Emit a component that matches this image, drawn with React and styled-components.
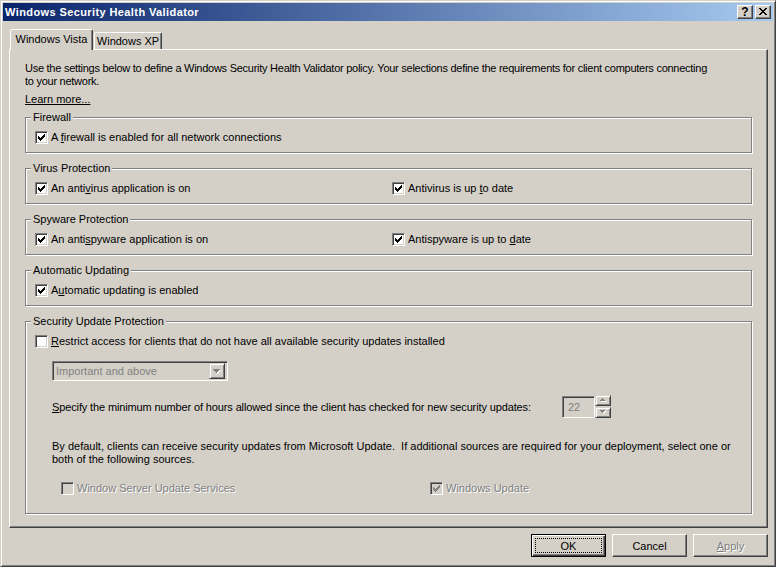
import React from "react";
import styled, { createGlobalStyle } from "styled-components";

const FACE = "#d4d0c8";
const SHADOW = "#808080";
const DARK = "#404040";

const GlobalStyle = createGlobalStyle`
  html, body {
    margin: 0;
    padding: 0;
    background: ${FACE};
  }
  body {
    font-family: "Liberation Sans", Arial, sans-serif;
    font-size: 11px;
    color: #000;
  }
  * {
    box-sizing: border-box;
  }
`;

const Window = styled.div`
  width: 776px;
  height: 567px;
  display: flex;
  flex-direction: column;
  padding: 2px;
  background: ${FACE};
  border: 1px solid;
  border-color: ${FACE} ${DARK} ${DARK} ${FACE};
  box-shadow: inset 1px 1px #fff, inset -1px -1px ${SHADOW};
`;

const TitleBar = styled.div`
  height: 18px;
  display: flex;
  align-items: center;
  padding: 0 2px;
  background: linear-gradient(to right, #0a246a, #a6caf0);
`;

const Title = styled.div`
  flex: 1;
  color: #fff;
  font-weight: bold;
  letter-spacing: 0.4px;
  line-height: 14px;
`;

const TitleButtons = styled.div`
  display: flex;
  gap: 2px;
`;

const TitleButton = styled.div`
  width: 16px;
  height: 14px;
  display: flex;
  align-items: center;
  justify-content: center;
  background: ${FACE};
  border: 1px solid;
  border-color: #fff ${DARK} ${DARK} #fff;
  box-shadow: inset -1px -1px ${SHADOW};
  font-weight: bold;
  font-size: 12px;
  line-height: 12px;
  padding-bottom: 1px;
`;

const Body = styled.div`
  flex: 1;
  display: flex;
  flex-direction: column;
  padding: 8px 5px 0 6px;
`;

const TabStrip = styled.div`
  height: 20px;
  display: flex;
  align-items: flex-end;
  padding-left: 1px;
`;

const Tab = styled.div`
  position: relative;
  width: ${(p) => (p.$selected ? 83 : 68)}px;
  height: ${(p) => (p.$selected ? 21 : 17)}px;
  margin-bottom: ${(p) => (p.$selected ? -1 : 0)}px;
  margin-left: ${(p) => (p.$selected ? 0 : 1)}px;
  z-index: ${(p) => (p.$selected ? 2 : 1)};
  display: flex;
  align-items: center;
  justify-content: center;
  padding-bottom: ${(p) => (p.$selected ? 2 : 0)}px;
  background: ${FACE};
  border: 1px solid;
  border-bottom: none;
  border-color: #fff ${DARK} transparent #fff;
  border-radius: 2px 2px 0 0;
  box-shadow: inset -1px 0 ${SHADOW};
  white-space: nowrap;
`;

const Panel = styled.div`
  flex: 1;
  display: flex;
  flex-direction: column;
  padding: 12px 15px 0 15px;
  border: 1px solid;
  border-color: #fff ${DARK} ${DARK} #fff;
  box-shadow: inset -1px -1px ${SHADOW};
`;

const Intro = styled.p`
  margin: 0;
  line-height: 13px;
  letter-spacing: -0.26px;
  white-space: nowrap;
`;

const LearnMore = styled.span`
  margin-top: 5px;
  line-height: 13px;
  text-decoration: underline;
  align-self: flex-start;
`;

const Group = styled.fieldset`
  margin: ${(p) => (p.$first ? 5 : 9)}px 0 0;
  padding: 7px 9px ${(p) => p.$bottom || 8}px 9px;
  min-width: 0;
  border: 1px solid ${SHADOW};
  box-shadow: inset 1px 1px #fff, 1px 1px #fff;
`;

const Legend = styled.legend`
  margin-left: -4px;
  padding: 0 2px;
  line-height: 13px;
  background: ${FACE};
`;

const Columns = styled.div`
  display: grid;
  grid-template-columns: ${(p) => p.$first}px auto;
`;

const CheckRow = styled.label`
  display: flex;
  align-items: center;
  gap: 3px;
  line-height: 13px;
  white-space: nowrap;
  color: ${(p) => (p.$disabled ? SHADOW : "#000")};
  text-shadow: ${(p) => (p.$disabled ? "1px 1px 0 #fff" : "none")};
`;

const Box = styled.span`
  width: 13px;
  height: 13px;
  flex: none;
  display: flex;
  align-items: center;
  justify-content: center;
  background: ${(p) => (p.$disabled ? FACE : "#fff")};
  border: 1px solid;
  border-color: ${SHADOW} #fff #fff ${SHADOW};
  box-shadow: inset 1px 1px ${DARK}, inset -1px -1px ${FACE};
  text-shadow: none;
`;

const Indent = styled.div`
  margin-left: ${(p) => p.$left}px;
  margin-top: ${(p) => p.$top}px;
`;

const Select = styled.div`
  width: 176px;
  height: 20px;
  display: flex;
  align-items: center;
  padding: 2px;
  border: 1px solid;
  border-color: ${SHADOW} #fff #fff ${SHADOW};
  box-shadow: inset 1px 1px ${DARK}, inset -1px -1px ${FACE};
  background: ${FACE};
`;

const SelectText = styled.span`
  flex: 1;
  padding-left: 1px;
  color: ${SHADOW};
  line-height: 13px;
  white-space: nowrap;
`;

const ArrowButton = styled.span`
  width: ${(p) => p.$w}px;
  height: ${(p) => p.$h}px;
  flex: none;
  display: flex;
  align-items: center;
  justify-content: center;
  background: ${FACE};
  border: 1px solid;
  border-color: ${FACE} ${DARK} ${DARK} ${FACE};
  box-shadow: inset 1px 1px #fff, inset -1px -1px ${SHADOW};
`;

const HoursRow = styled.div`
  display: grid;
  grid-template-columns: 510px auto;
  align-items: center;
  margin-top: 15px;
  line-height: 13px;
  white-space: nowrap;
`;

const HoursText = styled.span`
  letter-spacing: -0.13px;
`;

const Spinner = styled.div`
  display: flex;
  align-items: center;
`;

const SpinEdit = styled.div`
  width: 33px;
  height: 22px;
  display: flex;
  align-items: center;
  padding-left: 5px;
  color: ${SHADOW};
  background: ${FACE};
  border: 1px solid;
  border-color: ${SHADOW} #fff #fff ${SHADOW};
  box-shadow: inset 1px 1px ${DARK}, inset -1px -1px ${FACE};
`;

const SpinArrows = styled.div`
  display: flex;
  flex-direction: column;
  margin-top: -2px;
  gap: 1px;
`;

const Note = styled.p`
  margin: 22px 0 0;
  line-height: 13px;
  white-space: nowrap;
`;

const Footer = styled.div`
  height: 36px;
  display: flex;
  justify-content: flex-end;
  gap: 6px;
  padding-top: 6px;
`;

const Button = styled.div`
  position: relative;
  width: 75px;
  height: 23px;
  display: flex;
  align-items: center;
  justify-content: center;
  background: ${FACE};
  border: 1px solid;
  border-color: ${(p) => (p.$default ? "#000" : `#fff ${DARK} ${DARK} #fff`)};
  box-shadow: ${(p) =>
    p.$default
      ? `inset 1px 1px #fff, inset -1px -1px ${DARK}, inset -2px -2px ${SHADOW}`
      : `inset -1px -1px ${SHADOW}`};
  color: ${(p) => (p.$disabled ? SHADOW : "#000")};
  text-shadow: ${(p) => (p.$disabled ? "1px 1px 0 #fff" : "none")};

  &::after {
    content: "";
    display: ${(p) => (p.$default ? "block" : "none")};
    position: absolute;
    inset: 3px;
    border: 1px dotted #000;
  }
`;

const CheckMark = ({ color = "#000" }) => (
  <svg width="7" height="7" viewBox="0 0 7 7" shapeRendering="crispEdges">
    <path
      fill={color}
      d="M6 0h1v1h-1z M5 1h2v1h-2z M0 2h1v1h-1z M4 2h3v1h-3z M0 3h2v1h-2z M3 3h3v1h-3z M0 4h5v1h-5z M1 5h3v1h-3z M2 6h1v1h-1z"
    />
  </svg>
);

const CloseGlyph = () => (
  <svg width="8" height="7" viewBox="0 0 8 7" shapeRendering="crispEdges">
    <path
      fill="#000"
      d="M0 0h2v1h-2z M6 0h2v1h-2z M1 1h2v1h-2z M5 1h2v1h-2z M2 2h4v1h-4z M3 3h2v1h-2z M2 4h4v1h-4z M1 5h2v1h-2z M5 5h2v1h-2z M0 6h2v1h-2z M6 6h2v1h-2z"
    />
  </svg>
);

const DownArrow = () => (
  <svg width="8" height="5" viewBox="0 0 8 5" shapeRendering="crispEdges">
    <path fill="#fff" d="M1 1h7v1h-7z M2 2h5v1h-5z M3 3h3v1h-3z M4 4h1v1h-1z" />
    <path fill={SHADOW} d="M0 0h7v1h-7z M1 1h5v1h-5z M2 2h3v1h-3z M3 3h1v1h-1z" />
  </svg>
);

const SmallArrow = ({ up }) => (
  <svg width="6" height="4" viewBox="0 0 6 4" shapeRendering="crispEdges">
    {up ? (
      <>
        <path fill="#fff" d="M3 1h1v1h-1z M2 2h3v1h-3z M1 3h5v1h-5z" />
        <path fill={SHADOW} d="M2 0h1v1h-1z M1 1h3v1h-3z M0 2h5v1h-5z" />
      </>
    ) : (
      <>
        <path fill="#fff" d="M1 1h5v1h-5z M2 2h3v1h-3z M3 3h1v1h-1z" />
        <path fill={SHADOW} d="M0 0h5v1h-5z M1 1h3v1h-3z M2 2h1v1h-1z" />
      </>
    )}
  </svg>
);

const Check = ({ checked, disabled, children }) => (
  <CheckRow $disabled={disabled}>
    <Box $disabled={disabled}>
      {checked && <CheckMark color={disabled ? SHADOW : "#000"} />}
    </Box>
    <span>{children}</span>
  </CheckRow>
);

const App = () => (
  <>
    <GlobalStyle />
    <Window>
      <TitleBar>
        <Title>Windows Security Health Validator</Title>
        <TitleButtons>
          <TitleButton>?</TitleButton>
          <TitleButton>
            <CloseGlyph />
          </TitleButton>
        </TitleButtons>
      </TitleBar>
      <Body>
        <TabStrip>
          <Tab $selected>Windows Vista</Tab>
          <Tab>Windows XP</Tab>
        </TabStrip>
        <Panel>
          <Intro>
            Use the settings below to define a Windows Security Health Validator
            policy. Your selections define the requirements for client computers
            connecting
            <br />
            to your network.
          </Intro>
          <LearnMore>Learn more...</LearnMore>

          <Group $first>
            <Legend>Firewall</Legend>
            <Check checked>
              A <u>f</u>irewall is enabled for all network connections
            </Check>
          </Group>

          <Group>
            <Legend>Virus Protection</Legend>
            <Columns $first={357}>
              <Check checked>
                An anti<u>v</u>irus application is on
              </Check>
              <Check checked>
                Antivirus is up <u>t</u>o date
              </Check>
            </Columns>
          </Group>

          <Group>
            <Legend>Spyware Protection</Legend>
            <Columns $first={357}>
              <Check checked>
                An anti<u>s</u>pyware application is on
              </Check>
              <Check checked>
                Antispyware is up to <u>d</u>ate
              </Check>
            </Columns>
          </Group>

          <Group>
            <Legend>Automatic Updating</Legend>
            <Check checked>
              A<u>u</u>tomatic updating is enabled
            </Check>
          </Group>

          <Group $bottom={18}>
            <Legend>Security Update Protection</Legend>
            <Check>
              <u>R</u>estrict access for clients that do not have all available
              security updates installed
            </Check>
            <Indent $left={17} $top={0}>
              <Indent $left={0} $top={13}>
                <Select>
                  <SelectText>Important and above</SelectText>
                  <ArrowButton $w={16} $h={16}>
                    <DownArrow />
                  </ArrowButton>
                </Select>
              </Indent>
              <HoursRow>
                <HoursText>
                  <u>S</u>pecify the minimum number of hours allowed since the
                  client has checked for new security updates:
                </HoursText>
                <Spinner>
                  <SpinEdit>22</SpinEdit>
                  <SpinArrows>
                    <ArrowButton $w={16} $h={11}>
                      <SmallArrow up />
                    </ArrowButton>
                    <ArrowButton $w={16} $h={11}>
                      <SmallArrow />
                    </ArrowButton>
                  </SpinArrows>
                </Spinner>
              </HoursRow>
              <Note>
                By default, clients can receive security updates from Microsoft
                Update.&nbsp; If additional sources are required for your
                deployment, select one or
                <br />
                both of the following sources.
              </Note>
              <Indent $left={9} $top={16}>
                <Columns $first={369}>
                  <Check disabled>Window Server Update Services</Check>
                  <Check checked disabled>
                    Windows Update
                  </Check>
                </Columns>
              </Indent>
            </Indent>
          </Group>
        </Panel>
        <Footer>
          <Button $default>OK</Button>
          <Button>Cancel</Button>
          <Button $disabled>
            <span>
              <u>A</u>pply
            </span>
          </Button>
        </Footer>
      </Body>
    </Window>
  </>
);

export default App;
